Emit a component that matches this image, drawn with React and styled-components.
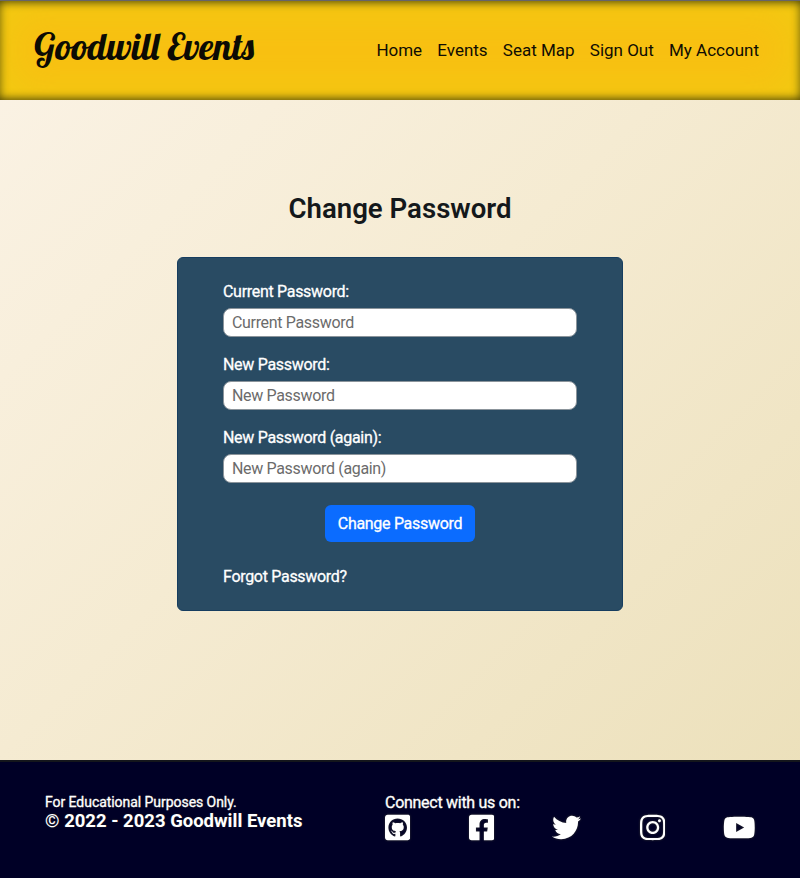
import React from "react";
import styled, { createGlobalStyle } from "styled-components";
import {
  FaGithubSquare,
  FaFacebookSquare,
  FaTwitter,
  FaInstagram,
  FaYoutube,
} from "react-icons/fa";

const GlobalStyle = createGlobalStyle`
  *, *::before, *::after { box-sizing: border-box; }
  body {
    margin: 0;
    font-family: Roboto, "Liberation Sans", sans-serif;
    font-size: 16px;
    color: #14181b;
  }
  h1, p { margin: 0; }
  a { color: inherit; text-decoration: none; }
`;

const Page = styled.div`
  display: flex;
  flex-direction: column;
  height: 878px;
  overflow: hidden;
  background: linear-gradient(135deg, #fbf3e6 0%, #f5ebd2 45%, #ebdfb8 100%);
`;

const Header = styled.header`
  display: flex;
  align-items: center;
  justify-content: space-between;
  flex: none;
  height: 100px;
  padding: 0 41px 0 34px;
  border-top: 1px solid #66646a;
  background: #f8c012;
  box-shadow:
    inset 0 21px 10px -20px rgba(40, 36, 0, 0.75),
    inset 0 -21px 10px -20px rgba(40, 36, 0, 0.75),
    inset 20px 0 10px -20px rgba(40, 36, 0, 0.5),
    inset -20px 0 10px -20px rgba(40, 36, 0, 0.5),
    inset 0 0 6px 1px #ceb214,
    inset 0 0 44px 8px #f1cb12;
`;

const Brand = styled.a`
  font: 400 37px/50px Lobster, "Liberation Serif", serif;
  color: #0c0b04;
  white-space: nowrap;
  margin-top: -10px;
`;

const Nav = styled.nav`
  display: flex;
  gap: 15.2px;
  margin-top: -2px;
  font-size: 17px;
  line-height: 24px;
  color: #0f0d03;
  white-space: nowrap;
`;

const Main = styled.main`
  display: flex;
  flex: 1;
  flex-direction: column;
  align-items: center;
  padding-top: 92px;
`;

const Title = styled.h1`
  font-size: 27.6px;
  line-height: 34px;
  font-weight: 600;
`;

const Card = styled.form`
  display: flex;
  flex-direction: column;
  width: 446px;
  height: 354px;
  margin-top: 31px;
  padding: 22px 45px 0;
  border: 1px solid #163d5f;
  border-radius: 6px;
  background: #294b63;
  color: #fff;
  letter-spacing: -0.3px;
`;

const Field = styled.label`
  display: flex;
  flex-direction: column;
  height: 72.8px;
  font-size: 16px;
  line-height: 24px;
  -webkit-text-stroke: 0.3px #fff;
`;

const Input = styled.input`
  height: 29px;
  margin-top: 4px;
  padding: 0 8px;
  border: 1px solid #8b949b;
  border-radius: 8px;
  background: #fff;
  font: 400 16px Roboto, sans-serif;
  letter-spacing: -0.33px;
  -webkit-text-stroke: 0;
  &::placeholder { color: #6b6b6b; opacity: 1; }
`;

const Submit = styled.button`
  align-self: center;
  width: 150px;
  height: 37px;
  margin-top: 6.6px;
  padding: 0;
  border: 0;
  border-radius: 6px;
  background: #0b6cff;
  color: #fff;
  font: 400 16px Roboto, sans-serif;
  letter-spacing: -0.3px;
  -webkit-text-stroke: 0.3px #fff;
`;

const Forgot = styled.a`
  margin-top: 24px;
  font-size: 16px;
  line-height: 22px;
  -webkit-text-stroke: 0.3px #fff;
`;

const Footer = styled.footer`
  display: grid;
  grid-template-columns: 340px 371px;
  flex: none;
  height: 118px;
  padding: 31px 0 0 45px;
  border-top: 2px solid #14161c;
  background: #000026;
  color: #fff;
  text-shadow: 0 0 2px #222;
`;

const Note = styled.p`
  font-size: 14px;
  line-height: 18px;
  letter-spacing: -0.05px;
  -webkit-text-stroke: 0.3px #fff;
`;

const Copyright = styled.p`
  font-size: 18.5px;
  font-weight: 700;
  line-height: 20px;
`;

const Connect = styled.p`
  padding-top: 1px;
  font-size: 16px;
  line-height: 18px;
  letter-spacing: -0.28px;
  -webkit-text-stroke: 0.3px #fff;
`;

const Socials = styled.div`
  display: flex;
  align-items: center;
  justify-content: space-between;
  margin-top: 1px;
`;

const SocialLink = styled.a`
  flex: none;
  width: ${(p) => p.$width}px;
  svg {
    display: block;
    width: 100%;
    height: 29px;
    filter: drop-shadow(0 0 1px #333);
  }
`;

const links = ["Home", "Events", "Seat Map", "Sign Out", "My Account"];
const fields = ["Current Password", "New Password", "New Password (again)"];
const socials = [
  { name: "GitHub", Icon: FaGithubSquare, width: 25.4 },
  { name: "Facebook", Icon: FaFacebookSquare, width: 25.4 },
  { name: "Twitter", Icon: FaTwitter, width: 29 },
  { name: "Instagram", Icon: FaInstagram, width: 25.4 },
  { name: "YouTube", Icon: FaYoutube, width: 32.6 },
];

export default function App() {
  return (
    <Page>
      <GlobalStyle />
      <Header>
        <Brand href="#">Goodwill Events</Brand>
        <Nav>
          {links.map((label) => (
            <a href="#" key={label}>{label}</a>
          ))}
        </Nav>
      </Header>
      <Main>
        <Title>Change Password</Title>
        <Card>
          {fields.map((label) => (
            <Field key={label}>
              {label}:
              <Input type="password" placeholder={label} />
            </Field>
          ))}
          <Submit type="button">Change Password</Submit>
          <Forgot href="#">Forgot Password?</Forgot>
        </Card>
      </Main>
      <Footer>
        <div>
          <Note>For Educational Purposes Only.</Note>
          <Copyright>© 2022 - 2023 Goodwill Events</Copyright>
        </div>
        <div>
          <Connect>Connect with us on:</Connect>
          <Socials>
            {socials.map(({ name, Icon, width }) => (
              <SocialLink href="#" key={name} aria-label={name} $width={width}>
                <Icon />
              </SocialLink>
            ))}
          </Socials>
        </div>
      </Footer>
    </Page>
  );
}
